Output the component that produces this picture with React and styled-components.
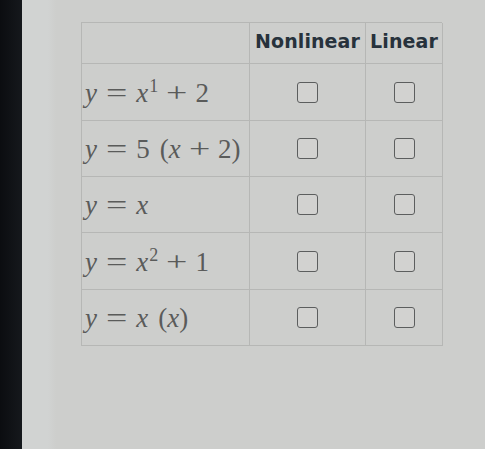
import React from 'react';
import styled, { createGlobalStyle } from 'styled-components';

const GlobalStyle = createGlobalStyle`
  html, body {
    margin: 0;
    padding: 0;
    background: #cdcecc;
  }
  #root {
    height: 449px;
  }
`;

const Monitor = styled.div`
  display: flex;
  height: 449px;
  overflow: hidden;
`;

const Bezel = styled.div`
  width: 22px;
  background: linear-gradient(90deg, #0b0d10 0%, #15181c 100%);
  flex-shrink: 0;
`;

const Screen = styled.div`
  flex: 1;
  padding: 22px 0 0 59px;
  background: linear-gradient(90deg, #d1d3d2 0px, #d1d3d2 26px, #cdcecc 34px, #cdcecc 100%);
`;

const Grid = styled.div`
  display: grid;
  grid-template-columns: 168px 116px 77px;
  grid-template-rows: 41px 57px 56px 56px 57px 56px;
  width: 361px;
  border-top: 1px solid #b6b7b5;
  border-left: 1px solid #b6b7b5;
  box-sizing: border-box;
`;

const Cell = styled.div`
  display: flex;
  align-items: center;
  justify-content: ${p => (p.$left ? 'flex-start' : 'center')};
  padding-left: ${p => (p.$left ? '3px' : '0')};
  border-right: 1px solid #b6b7b5;
  border-bottom: 1px solid #b6b7b5;
  box-sizing: border-box;
  min-width: 0;
`;

const Head = styled(Cell)`
  font-family: "DejaVu Sans", "Liberation Sans", sans-serif;
  font-weight: bold;
  font-size: 19px;
  color: #27323c;
  padding-bottom: 4px;
  letter-spacing: 0.1px;
`;

const Math = styled.span`
  font-family: "Liberation Serif", "DejaVu Serif", serif;
  font-size: 27px;
  color: #5a5b5a;
  white-space: nowrap;
  padding-top: 2px;
`;

const V = styled.i`
  font-style: italic;
`;

const Op = styled.span`
  display: inline-block;
  margin: 0 ${p => p.$gap || 7}px;
  transform: scaleX(1.4);
`;

const Paren = styled.span`
  margin-left: ${p => p.$gap || 0}px;
`;

const Sup = styled.sup`
  font-size: 18px;
  vertical-align: 10px;
  line-height: 0;
  margin-left: 1px;
`;

const Box = styled.span`
  width: 19px;
  height: 19px;
  border: 1.5px solid #5c5e5e;
  border-radius: 3px;
  background: #d2d2d0;
`;

const rows = [
  <><V>y</V><Op $gap={12}>=</Op><V>x</V><Sup>1</Sup><Op $gap={11}>+</Op>2</>,
  <><V>y</V><Op $gap={12}>=</Op>5<Paren $gap={10}>(</Paren><V>x</V><Op $gap={11}>+</Op>2)</>,
  <><V>y</V><Op $gap={12}>=</Op><V>x</V></>,
  <><V>y</V><Op $gap={12}>=</Op><V>x</V><Sup>2</Sup><Op $gap={11}>+</Op>1</>,
  <><V>y</V><Op $gap={12}>=</Op><V>x</V><Paren $gap={10}>(</Paren><V>x</V>)</>,
];

export default function App() {
  return (
    <>
      <GlobalStyle />
      <Monitor>
        <Bezel />
        <Screen>
          <Grid>
            <Head />
            <Head>Nonlinear</Head>
            <Head>Linear</Head>
            {rows.map((eq, i) => (
              <React.Fragment key={i}>
                <Cell $left><Math>{eq}</Math></Cell>
                <Cell><Box /></Cell>
                <Cell><Box /></Cell>
              </React.Fragment>
            ))}
          </Grid>
        </Screen>
      </Monitor>
    </>
  );
}
